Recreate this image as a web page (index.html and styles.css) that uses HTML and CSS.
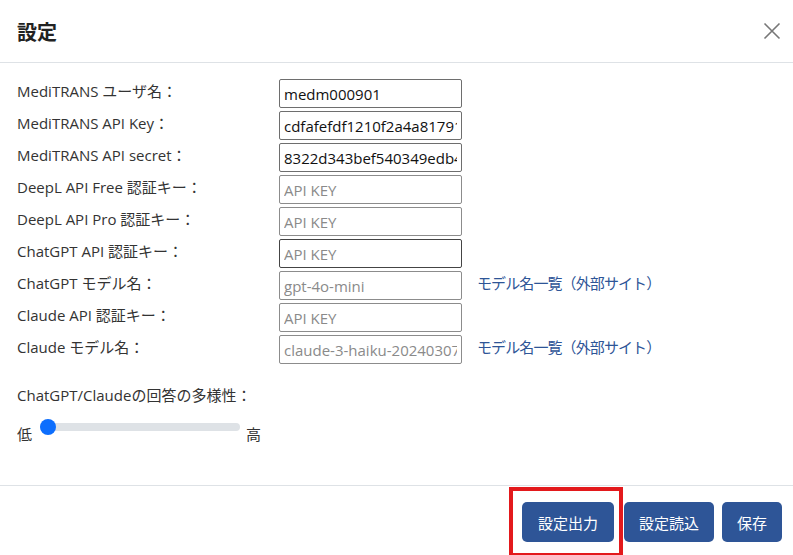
FILE: index.html
```html
<!DOCTYPE html>
<html lang="ja">
<head>
    <meta charset="UTF-8">
    <meta name="viewport" content="width=device-width, initial-scale=1.0">
    <title>設定</title>
    <link rel="stylesheet" href="styles.css">
</head>
<body>
    <div class="modal-header">
        <h1>設定</h1>
        <button class="close-btn" aria-label="閉じる">
            <svg width="18" height="18" viewBox="0 0 18 18">
                <path d="M1.5 1.5 L16.5 16.5 M16.5 1.5 L1.5 16.5" stroke="#777" stroke-width="1.6" fill="none"/>
            </svg>
        </button>
    </div>

    <div class="modal-body">
        <div class="form-row">
            <label>MediTRANS ユーザ名：</label>
            <input type="text" class="field filled" value="medm000901">
        </div>
        <div class="form-row">
            <label>MediTRANS API Key：</label>
            <input type="text" class="field filled" value="cdfafefdf1210f2a4a81791b2c">
        </div>
        <div class="form-row">
            <label>MediTRANS API secret：</label>
            <input type="text" class="field filled" value="8322d343bef540349edb4a1e">
        </div>
        <div class="form-row">
            <label>DeepL API Free 認証キー：</label>
            <input type="text" class="field" placeholder="API KEY">
        </div>
        <div class="form-row">
            <label>DeepL API Pro 認証キー：</label>
            <input type="text" class="field" placeholder="API KEY">
        </div>
        <div class="form-row">
            <label>ChatGPT API 認証キー：</label>
            <input type="text" class="field dark" placeholder="API KEY">
        </div>
        <div class="form-row">
            <label>ChatGPT モデル名：</label>
            <input type="text" class="field" placeholder="gpt-4o-mini">
            <a class="model-link" href="#">モデル名一覧（外部サイト）</a>
        </div>
        <div class="form-row">
            <label>Claude API 認証キー：</label>
            <input type="text" class="field" placeholder="API KEY">
        </div>
        <div class="form-row">
            <label>Claude モデル名：</label>
            <input type="text" class="field" placeholder="claude-3-haiku-20240307">
            <a class="model-link" href="#">モデル名一覧（外部サイト）</a>
        </div>

        <div class="range-block">
            <div class="range-label">ChatGPT/Claudeの回答の多様性：</div>
            <div class="range-row">
                <span class="range-end">低</span>
                <div class="range-track">
                    <span class="range-thumb"></span>
                </div>
                <span class="range-end">高</span>
            </div>
        </div>
    </div>

    <div class="modal-footer">
        <span class="highlight"></span>
        <button class="btn btn-export">設定出力</button>
        <button class="btn btn-import">設定読込</button>
        <button class="btn btn-save">保存</button>
    </div>
</body>
</html>
```

FILE: styles.css
```css
body {
    font-family: "Open Sans", "Noto Sans CJK JP", sans-serif;
    font-size: 15px;
    color: #333;
    background-color: #fff;
    margin: 0;
    width: 793px;
    height: 555px;
    overflow: hidden;
}

.modal-header {
    display: flex;
    justify-content: space-between;
    align-items: center;
    height: 63px;
    padding: 0 11px 0 17px;
    border-bottom: 1px solid #dee2e6;
    box-sizing: border-box;
}

.modal-header h1 {
    margin: 0;
    font-size: 20px;
    font-weight: bold;
    color: #222;
}

.close-btn {
    background: transparent;
    border: none;
    padding: 0;
    width: 18px;
    height: 18px;
    margin-right: 1px;
    cursor: pointer;
}

.modal-body {
    padding: 16px 17px 0 17px;
    height: 423px;
    box-sizing: border-box;
    border-bottom: 1px solid #dee2e6;
}

.form-row {
    display: flex;
    align-items: flex-start;
    height: 32px;
}

.form-row label {
    width: 262px;
    line-height: 24px;
    flex-shrink: 0;
}

.field {
    width: 183px;
    height: 29px;
    box-sizing: border-box;
    border: 1px solid #8c8c8c;
    border-radius: 2px;
    padding: 0 4px;
    font-family: "Open Sans", "Noto Sans CJK JP", sans-serif;
    font-size: 15px;
    color: #111;
    margin: 0;
}

.field::placeholder {
    color: #8a8a8a;
}

.field.filled {
    border-color: #6e6e6e;
}

.field.dark {
    border-color: #444;
}

.model-link {
    color: #2e5597;
    text-decoration: none;
    margin-left: 15px;
    line-height: 24px;
    letter-spacing: -0.9px;
}

.range-block {
    margin-top: 16px;
}

.range-label {
    line-height: 24px;
}

.range-row {
    display: flex;
    align-items: flex-start;
    margin-top: 10px;
}

.range-end {
    line-height: 20px;
    padding-top: 7px;
}

.range-track {
    position: relative;
    width: 200px;
    height: 8px;
    background-color: #dee2e6;
    border-radius: 4px;
    margin: 6px 6px 0 8px;
}

.range-thumb {
    position: absolute;
    left: 0;
    top: -4px;
    width: 16px;
    height: 16px;
    border-radius: 50%;
    background-color: #0d6efd;
}

.modal-footer {
    position: relative;
    display: flex;
    justify-content: flex-end;
    align-items: flex-start;
    padding: 16px 11px 0 0;
}

.btn {
    background-color: #2e5597;
    color: white;
    border: none;
    border-radius: 5px;
    height: 40px;
    padding: 0;
    font-family: "Open Sans", "Noto Sans CJK JP", sans-serif;
    font-size: 15px;
    cursor: pointer;
}

.btn-export {
    width: 92px;
}

.btn-import {
    width: 90px;
    margin-left: 10px;
}

.btn-save {
    width: 60px;
    margin-left: 8px;
}

.highlight {
    position: absolute;
    left: 509px;
    top: 1px;
    width: 114px;
    height: 70px;
    border: 4px solid #e3191c;
    box-sizing: border-box;
}
```
